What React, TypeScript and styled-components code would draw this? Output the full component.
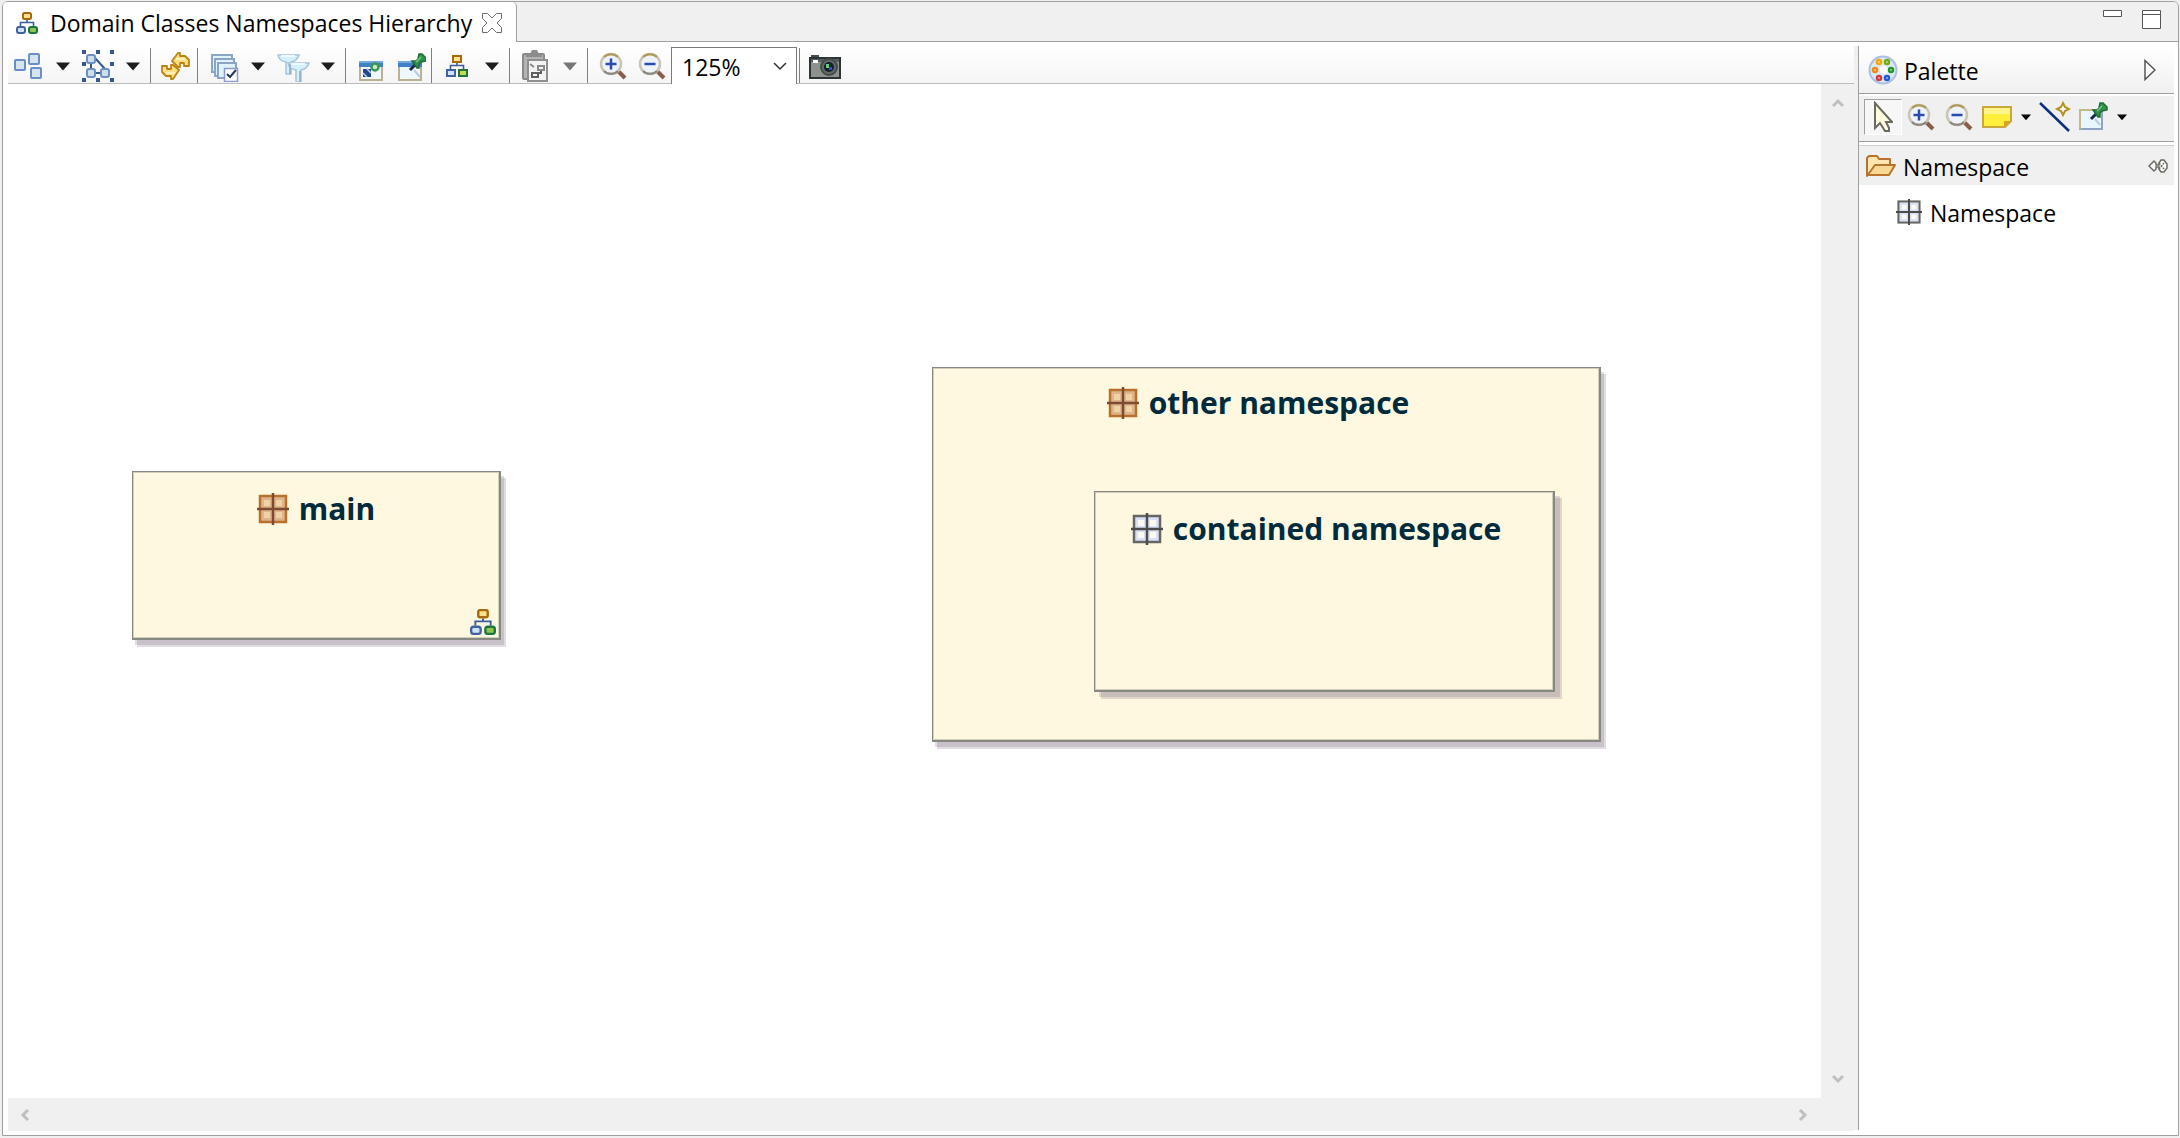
import React from 'react';
import styled, { createGlobalStyle } from 'styled-components';

const Global = createGlobalStyle`
  *, *::before, *::after { box-sizing: border-box; }
  body { margin: 0; background: #f0f0f0; }
  body, button, select { font-family: "Open Sans", "Noto Sans", sans-serif; font-size: 23px; color: #000; }
  button { border: 0; padding: 0; background: none; }
  svg { display: block; flex: none; }
`;

const Page = styled.div`
  display: flex;
  min-height: 100vh;
  padding: 1px 1px 2px 2px;
`;

const Frame = styled.section`
  flex: 1;
  display: flex;
  flex-direction: column;
  min-width: 0;
  border: 1px solid #a0a0a0;
  border-radius: 6px 6px 0 0;
  background: #fff;
  overflow: hidden;
`;

const Header = styled.header`
  display: flex;
  height: 40px;
  background: #f0f0f0;
`;

const Tab = styled.div`
  display: flex;
  align-items: center;
  padding: 2px 14px 0 13px;
  background: #fff;
  border-right: 1px solid #a0a0a0;
  border-top-right-radius: 5px;
`;

const TabTitle = styled.h1`
  margin: 0 10px 0 12px;
  font-size: 23px;
  line-height: 32px;
  font-weight: 400;
  white-space: nowrap;
`;

const HeaderRest = styled.div`
  flex: 1;
  display: flex;
  justify-content: flex-end;
  align-items: flex-start;
  gap: 20px;
  padding: 8px 17px 0 0;
  border-bottom: 1px solid #a0a0a0;
`;

const Body = styled.div`
  flex: 1;
  display: flex;
  padding: 4px 4px 4px 5px;
`;

const Editor = styled.main`
  flex: 1;
  display: flex;
  flex-direction: column;
  min-width: 0;
`;

const Toolbar = styled.div`
  display: flex;
  align-items: stretch;
  height: 38px;
  padding-top: 2px;
  border-bottom: 1px solid #bcbcbc;
  background: linear-gradient(#ffffff, #f5f5f5);
`;

const Tool = styled.button`
  display: flex;
  align-items: center;
  justify-content: center;
  width: 39px;
`;

const Arrow = styled(Tool)`
  width: 31px;
`;

const Separator = styled.span`
  width: 8px;
  padding-left: 2px;
  &::before {
    content: "";
    display: block;
    width: 1px;
    height: 100%;
    background: #808080;
  }
`;

const Combo = styled.label`
  display: grid;
  align-items: center;
  width: 126px;
  height: 38px;
  margin-top: -1px;
  border: 1px solid #7a7a7a;
  border-bottom: 0;
  background: #fff;
  & > * { grid-area: 1 / 1; }
  & > svg { justify-self: end; margin-right: 9px; pointer-events: none; }
`;

const ZoomSelect = styled.select`
  width: 100%;
  height: 36px;
  padding: 0 0 0 10px;
  border: 0;
  background: transparent;
  appearance: none;
`;

const Viewport = styled.div`
  flex: 1;
  display: grid;
  grid-template: minmax(0, 1fr) 33px / minmax(0, 1fr) 33px;
  background: #f0f0f0;
`;

const Canvas = styled.div`
  position: relative;
  background: #fff;
  overflow: hidden;
`;

const ScrollBar = styled.div<{ $vertical?: boolean }>`
  display: flex;
  flex-direction: ${p => (p.$vertical ? 'column' : 'row')};
  justify-content: space-between;
  align-items: center;
  padding: ${p => (p.$vertical ? '13px 0' : '0 12px 0 11px')};
`;

const Node = styled.article<{ $x: number; $y: number; $w: number; $h: number; $pad: number; $shadow: number }>`
  position: absolute;
  left: ${p => p.$x}px;
  top: ${p => p.$y}px;
  width: ${p => p.$w}px;
  height: ${p => p.$h}px;
  padding-top: ${p => p.$pad}px;
  border: 1px solid #868882;
  border-right-width: 2px;
  border-bottom-width: 2px;
  background: #fff8e1;
  box-shadow: inset 0 0 0 1px #d3cfbb,
    ${p => p.$shadow}px 5px 0 rgba(125, 110, 130, 0.24),
    ${p => p.$shadow + 2}px 7px 0 rgba(125, 110, 130, 0.24);
`;

const NodeTitle = styled.h2<{ $wide?: boolean }>`
  display: flex;
  justify-content: center;
  align-items: center;
  gap: 10px;
  margin: 0;
  padding-right: ${p => (p.$wide ? 16 : 0)}px;
  font-size: 30px;
  line-height: 40px;
  font-weight: 700;
  white-space: nowrap;
  color: #002b3d;
`;

const NodeBadge = styled.span`
  position: absolute;
  right: 3px;
  bottom: 3px;
`;

const Sash = styled.div`
  width: 5px;
  margin-bottom: 1px;
  border-right: 1px solid #a0a0a0;
  background: #f0f0f0;
`;

const Palette = styled.aside`
  width: 315px;
  display: flex;
  flex-direction: column;
`;

const PaletteHeader = styled.div`
  display: flex;
  align-items: center;
  gap: 6px;
  height: 48px;
  padding: 0 18px 0 9px;
  border-bottom: 1px solid #a0a0a0;
  background: linear-gradient(#ffffff, #f0f0f0);
`;

const Label = styled.span`
  flex: 1;
  padding-top: 2px;
  line-height: 32px;
`;

const PaletteTools = styled.div`
  display: flex;
  height: 46px;
  margin-top: 2px;
  padding: 3px 5px 6px;
  background: #f0f0f0;
  border-bottom: 1px solid #a0a0a0;
`;

const PaletteTool = styled(Tool)<{ $active?: boolean }>`
  width: 38px;
  border: 1px solid;
  border-color: ${p => (p.$active ? '#a0a0a0 #fff #fff #a0a0a0' : 'transparent')};
  background: ${p => (p.$active ? '#f7f7f7' : 'none')};
`;

const PaletteArrow = styled(Tool)`
  width: 20px;
`;

const DrawerHeader = styled.button`
  display: flex;
  align-items: center;
  gap: 6px;
  height: 40px;
  margin-top: 3px;
  padding: 0 6px;
  text-align: left;
  border-top: 1px solid #d0d0d0;
  background: #f0f0f0;
`;

const DrawerItem = styled.button`
  display: flex;
  align-items: center;
  gap: 8px;
  height: 54px;
  padding-left: 37px;
  text-align: left;
`;

const Hierarchy = ({ size = 22, flat }: { size?: number; flat?: boolean }) => (
  <svg width={size} height={size} viewBox="0 0 22 22" fill="none" aria-hidden="true">
    <path d="M11 8v3M4.5 14v-3.5h13V14" stroke="#3a5d9e" strokeWidth="1.6" />
    <rect x="7" y="1" width="8" height="6" rx={flat ? 0 : 1.5} fill="#ffe08c" stroke="#a8690a" strokeWidth="2" />
    <rect x="1" y="15" width="8" height="6" rx={flat ? 0 : 2} fill="#cfe2fb" stroke="#4361a0" strokeWidth="2" />
    <rect x="13" y="15" width="8" height="6" rx={flat ? 0 : 2} fill={flat ? '#c6dc4c' : '#8cc850'} stroke="#1d7440" strokeWidth="2" />
  </svg>
);

const Down = ({ color = '#1e1e1e', w = 14 }: { color?: string; w?: number }) => (
  <svg width={w} height={w} viewBox="0 0 14 14" aria-hidden="true"><path d="M0 3.500h14l-7 8z" fill={color} /></svg>
);

const CloseX = () => (
  <svg width="20" height="20" viewBox="0 0 20 20" fill="#fff" stroke="#6e6e6e" aria-hidden="true">
    <path d="M.5.5h5l4.500 4.500L14.500.5h5v5L15 10l4.500 4.500v5h-5L10 15l-4.500 4.500h-5v-5L5 10 .5 5.500z" />
  </svg>
);

const Arrange = () => (
  <svg width="32" height="32" fill="#d6e4ef" stroke="#6a8fc4" strokeWidth="2" aria-hidden="true">
    <rect x="3" y="10" width="10" height="10" rx="1" />
    <rect x="17" y="4" width="10" height="10" rx="1" />
    <rect x="19" y="18" width="10" height="10" rx="1" />
  </svg>
);

const SelectAll = () => (
  <svg width="32" height="32" aria-hidden="true">
    <path d="M9 12v10M12 23h8M13 8l10 11" stroke="#35598f" strokeWidth="2" />
    <g fill="#cfdfea" stroke="#6a8fc4" strokeWidth="2">
      <rect x="5" y="5" width="8" height="8" rx="2" />
      <rect x="5" y="19" width="8" height="8" rx="2" />
      <rect x="19" y="19" width="8" height="8" rx="2" />
    </g>
    <path fill="#35598f" d="M0 0h4v4H0zM14 0h4v4h-4zM28 0h4v4h-4zM0 12h4v4H0zM28 12h4v4h-4zM0 28h4v4H0zM14 28h4v4h-4zM28 28h4v4h-4z" />
  </svg>
);

const Refresh = () => (
  <svg width="32" height="34" fill="#ffdf84" stroke="#bd8414" strokeWidth="1.800" strokeLinejoin="round" aria-hidden="true">
    <path d="M12 12l6-8h2v3h5l4 4v6h-5v-3h-4v4h-2z" />
    <path d="M19 21l-6 9h-2v-3H6l-4-4v-6h5v3h4v-4h2z" />
    <path d="M16 10h9M15 24H6" stroke="#fff0b8" />
  </svg>
);

const Layers = () => (
  <svg width="32" height="32" fill="#dff3fb" stroke="#8aa5c6" strokeWidth="2" aria-hidden="true">
    <path d="M5 5h20v17H5z" />
    <path d="M8 9h19v17H8z" />
    <path d="M11 13h18v15H11z" />
    <path d="M17.500 18.500h13v13h-13z" fill="#fff" stroke="#8d9bcb" strokeWidth="1.500" />
    <path d="M20 24l3 3 6-7" fill="none" stroke="#223a5e" />
  </svg>
);

const Filter = () => (
  <svg width="34" height="32" aria-hidden="true">
    <g fill="#d4f0fd" stroke="#a9c3da" strokeWidth="1.500">
      <path d="M2 5h21q-2 6-8 7v12h-5V12q-7-1-8-7z" />
      <path d="M12 13h21q-2 6-8 7v12h-5V20q-7-1-8-7z" />
    </g>
    <path d="M14 14v10M24 21v11" stroke="#8ea9c8" strokeWidth="1.500" />
    <path d="M5 6h14M15 14h14" stroke="#eefaff" strokeWidth="2" />
  </svg>
);

const PinHead = () => (
  <>
    <path d="M14 18l5-5" stroke="#17294a" strokeWidth="3" />
    <path d="M16 9l4 0 2-2 1-5h3l4 4v3l-5 1-2 2v4h-2z" fill="#31924a" stroke="#1f6d37" strokeWidth="1.500" />
    <path d="M20 10l5-5" stroke="#7cc98c" strokeWidth="1.500" />
  </>
);

const WindowIcon = ({ pin }: { pin?: boolean }) => (
  <svg width="32" height="32" aria-hidden="true">
    <rect x="5" y="12" width="22" height="18" fill="#eff8ff" stroke="#b9b190" strokeWidth="2" />
    <path d="M4 11h24v6H4z" fill="#3f83c6" />
    <path d="M4 11h24v2H4z" fill="#73a9dc" />
    {pin ? (
      <g transform="translate(2 2)">
        <path d="M18 18l6 7" stroke="#b9cde4" strokeWidth="2" />
        <PinHead />
      </g>
    ) : (
      <>
        <path d="M8 19h8v8H8z" fill="#24478a" />
        <path d="M8 23l4 4M12 19l4 4" stroke="#b5cdf0" strokeWidth="1.500" />
        <circle cx="20" cy="17" r="3.500" fill="#c3e8c5" stroke="#3a9652" strokeWidth="2.500" />
      </>
    )}
  </svg>
);

const Paste = () => (
  <svg width="32" height="34" aria-hidden="true">
    <rect x="4" y="5" width="21" height="25" rx="1" fill="#b4b4b4" stroke="#8a8a8a" strokeWidth="2" />
    <path d="M7 8V5h4l2-4h5l2 4h3v3z" fill="#8c8c8c" />
    <path d="M9 11h19v21H9z" fill="#f3f3f3" stroke="#8f8f8f" strokeWidth="2" />
    <path d="M11 15l4 3M19 17h6v4h-6z" fill="none" stroke="#8a8a8a" strokeWidth="2" />
    <path d="M13 24h6v4h-6zM19 24h3v-2" fill="none" stroke="#5e5e5e" strokeWidth="2" />
  </svg>
);

const Magnifier = ({ plus }: { plus?: boolean }) => (
  <svg width="28" height="28" viewBox="0 0 28 28" aria-hidden="true">
    <path d="M19 19l7 7" stroke="#8a5e4a" strokeWidth="4" />
    <circle cx="12" cy="12" r="10" fill="#eef2fa" stroke="#c9c4b4" strokeWidth="2.500" />
    <path d="M5 5a10 10 0 0 1 14 0" fill="none" stroke="#b09a58" strokeWidth="2" />
    <path d="M5 19a10 10 0 0 0 14 0" fill="none" stroke="#8b897f" strokeWidth="2" />
    <path d={plus ? 'M6.500 12h11M12 6.500v11' : 'M6.500 12h11'} stroke="#2a4bb0" strokeWidth="2.500" />
  </svg>
);

const Camera = () => (
  <svg width="32" height="28" aria-hidden="true">
    <path d="M2 3h8v3H2z" fill="#444b4e" />
    <rect x="1" y="6" width="30" height="20" fill="#8f918c" stroke="#2c3436" strokeWidth="2" />
    <path d="M2 7h28v3H2z" fill="#566062" />
    <path d="M4 8h5v3H4z" fill="#fff" />
    <circle cx="20" cy="15" r="8" fill="#626a68" stroke="#454d4c" strokeWidth="2" />
    <circle cx="20" cy="15" r="5" fill="#16202a" />
    <path d="M17 12h3v4h-3z" fill="#5fd07a" />
    <path d="M20 15h3v3h-3z" fill="#3c46d8" />
  </svg>
);

const Chevron = ({ turn = 0 }: { turn?: number }) => (
  <svg width="12" height="12" viewBox="0 0 12 12" fill="none" stroke="#bfbfbf" strokeWidth="3" aria-hidden="true">
    <path d="M1 3l5 5 5-5" transform={`rotate(${turn} 6 6)`} />
  </svg>
);

const Namespace = ({ brown, size = 32 }: { brown?: boolean; size?: number }) => (
  <svg width={size} height={size} viewBox="0 0 32 32" aria-hidden="true">
    <rect x="3" y="3" width="26" height="26" fill={brown ? '#ddb48c' : '#d9e1f4'} stroke={brown ? '#b8702c' : '#666663'} strokeWidth="2.500" />
    <path
      d="M7 7h6v6H7zM19 7h6v6h-6zM7 19h6v6H7zM19 19h6v6h-6z"
      fill={brown ? '#efd3a4' : '#fffaf0'}
    />
    <path d="M16 0v32M0 16h32" stroke={brown ? '#7d4a32' : '#4c4c4c'} strokeWidth="2.500" />
  </svg>
);

const PaletteIcon = () => (
  <svg width="30" height="30" aria-hidden="true">
    <circle cx="15" cy="15" r="13.500" fill="#dce7f5" stroke="#a9c0e2" strokeWidth="2" />
    <circle cx="16" cy="15" r="4" fill="#fff" />
    <g fill="#fff" strokeWidth="2.500">
      <circle cx="11" cy="7" r="2" stroke="#f5a800" />
      <circle cx="19" cy="7" r="2" stroke="#6fae12" />
      <circle cx="7" cy="15" r="2" stroke="#f08a10" />
      <circle cx="23" cy="15" r="2" stroke="#1f9a28" />
      <circle cx="11" cy="23" r="2" stroke="#d03c3c" />
      <circle cx="19" cy="23" r="2" stroke="#1d5fd8" />
    </g>
  </svg>
);

const Cursor = () => (
  <svg width="20" height="32" aria-hidden="true">
    <path d="M2 2v25l5-5 5 8h4v-3l-3-6h6z" fill="#fffde0" stroke="#6b6a60" strokeWidth="2" />
  </svg>
);

const Note = () => (
  <svg width="30" height="24" aria-hidden="true">
    <path d="M1 2h28v14l-6 6H1z" fill="#ffee3c" stroke="#c9a73a" strokeWidth="2" />
    <path d="M2 3h26v6H2z" fill="#fff48a" />
    <path d="M22 22v-6h7z" fill="#d9a520" />
  </svg>
);

const LineTool = () => (
  <svg width="32" height="32" aria-hidden="true">
    <path d="M1 2l29 28" stroke="#0d2f80" strokeWidth="2.500" />
    <path d="M24 2l2 4 4 2-4 2-2 4-2-4-4-2 4-2z" fill="#fff" stroke="#b8901e" strokeWidth="2" />
  </svg>
);

const PinNote = () => (
  <svg width="32" height="32" aria-hidden="true">
    <rect x="3" y="9" width="22" height="19" fill="#e8f6ff" stroke="#8fa3c2" strokeWidth="2" />
    <path d="M3 28V9h22" fill="none" stroke="#c3b98a" strokeWidth="2" />
    <path d="M18 18l5 6" stroke="#b9cde4" strokeWidth="2" />
    <PinHead />
  </svg>
);

const Folder = () => (
  <svg width="32" height="24" fill="#ffe6b0" stroke="#b8742c" strokeWidth="2" strokeLinejoin="round" aria-hidden="true">
    <path d="M2 22V4l2-2h8l2 3h11v6" />
    <path d="M2 22l8-11h20l-6 10H2z" fill="#f8d894" />
  </svg>
);

const PinOpen = () => (
  <svg width="20" height="14" fill="#fff" stroke="#6c6a62" strokeWidth="1.500" aria-hidden="true">
    <path d="M1 7l5-5 2 2v2h3V4l2-3h3l3 4v4l-3 4h-3l-2-3V8H8v2l-2 2z" />
    <path d="M11 4l5 6M11 10l5-6" strokeDasharray="2 1" />
  </svg>
);

function DropTool({ label, children, color }: { label: string; children: React.ReactNode; color?: string }) {
  return (
    <>
      <Tool aria-label={label}>{children}</Tool>
      <Arrow aria-label={`${label} menu`}><Down color={color} /></Arrow>
    </>
  );
}

export default function App() {
  return (
    <Page>
      <Global />
      <Frame>
        <Header>
          <Tab>
            <Hierarchy />
            <TabTitle>Domain Classes Namespaces Hierarchy</TabTitle>
            <button aria-label="Close"><CloseX /></button>
          </Tab>
          <HeaderRest>
            <button aria-label="Minimize">
              <svg width="19" height="7" fill="#fff" stroke="#555"><path d="M.5.5h18v6H.5z" /></svg>
            </button>
            <button aria-label="Maximize">
              <svg width="19" height="19" fill="#fff" stroke="#555"><path d="M.5.5h18v18H.5zM.5 4.500h18" /></svg>
            </button>
          </HeaderRest>
        </Header>
        <Body>
          <Editor>
            <Toolbar role="toolbar">
              <DropTool label="Arrange"><Arrange /></DropTool>
              <DropTool label="Select"><SelectAll /></DropTool>
              <Separator />
              <Tool aria-label="Refresh"><Refresh /></Tool>
              <Separator />
              <DropTool label="Layers"><Layers /></DropTool>
              <DropTool label="Filters"><Filter /></DropTool>
              <Separator />
              <Tool aria-label="Show elements"><WindowIcon /></Tool>
              <Tool aria-label="Pin elements"><WindowIcon pin /></Tool>
              <Separator />
              <DropTool label="Diagram"><Hierarchy flat /></DropTool>
              <Separator />
              <DropTool label="Paste" color="#777"><Paste /></DropTool>
              <Separator />
              <Tool aria-label="Zoom in"><Magnifier plus /></Tool>
              <Tool aria-label="Zoom out"><Magnifier /></Tool>
              <Combo>
                <ZoomSelect aria-label="Zoom level" defaultValue="125%">
                  <option>125%</option>
                </ZoomSelect>
                <svg width="14" height="9" fill="none" stroke="#333" strokeWidth="1.500"><path d="M1 1l6 6 6-6" /></svg>
              </Combo>
              <Separator />
              <Tool aria-label="Export image"><Camera /></Tool>
            </Toolbar>
            <Viewport>
              <Canvas>
                <Node $x={124} $y={387} $w={369} $h={169} $pad={17} $shadow={3}>
                  <NodeTitle><Namespace brown />main</NodeTitle>
                  <NodeBadge><Hierarchy size={26} /></NodeBadge>
                </Node>
                <Node $x={924} $y={283} $w={669} $h={375} $pad={15} $shadow={3}>
                  <NodeTitle $wide><Namespace brown />other namespace</NodeTitle>
                  <Node $x={161} $y={123} $w={461} $h={201} $pad={17} $shadow={5}>
                    <NodeTitle $wide><Namespace />contained namespace</NodeTitle>
                  </Node>
                </Node>
              </Canvas>
              <ScrollBar $vertical><Chevron turn={180} /><Chevron /></ScrollBar>
              <ScrollBar><Chevron turn={90} /><Chevron turn={270} /></ScrollBar>
            </Viewport>
          </Editor>
          <Sash />
          <Palette>
            <PaletteHeader>
              <PaletteIcon />
              <Label>Palette</Label>
              <button aria-label="Collapse palette">
                <svg width="12" height="22" fill="#fff" stroke="#555" strokeWidth="1.500"><path d="M1 1.500v19L11 11z" /></svg>
              </button>
            </PaletteHeader>
            <PaletteTools role="toolbar">
              <PaletteTool $active aria-label="Select"><Cursor /></PaletteTool>
              <PaletteTool aria-label="Zoom in"><Magnifier plus /></PaletteTool>
              <PaletteTool aria-label="Zoom out"><Magnifier /></PaletteTool>
              <PaletteTool aria-label="Note"><Note /></PaletteTool>
              <PaletteArrow aria-label="Note menu"><Down color="#000" w={10} /></PaletteArrow>
              <PaletteTool aria-label="Connection"><LineTool /></PaletteTool>
              <PaletteTool aria-label="Pin"><PinNote /></PaletteTool>
              <PaletteArrow aria-label="Pin menu"><Down color="#000" w={10} /></PaletteArrow>
            </PaletteTools>
            <DrawerHeader>
              <Folder />
              <Label>Namespace</Label>
              <PinOpen />
            </DrawerHeader>
            <DrawerItem>
              <Namespace size={26} />
              <Label>Namespace</Label>
            </DrawerItem>
          </Palette>
        </Body>
      </Frame>
    </Page>
  );
}
